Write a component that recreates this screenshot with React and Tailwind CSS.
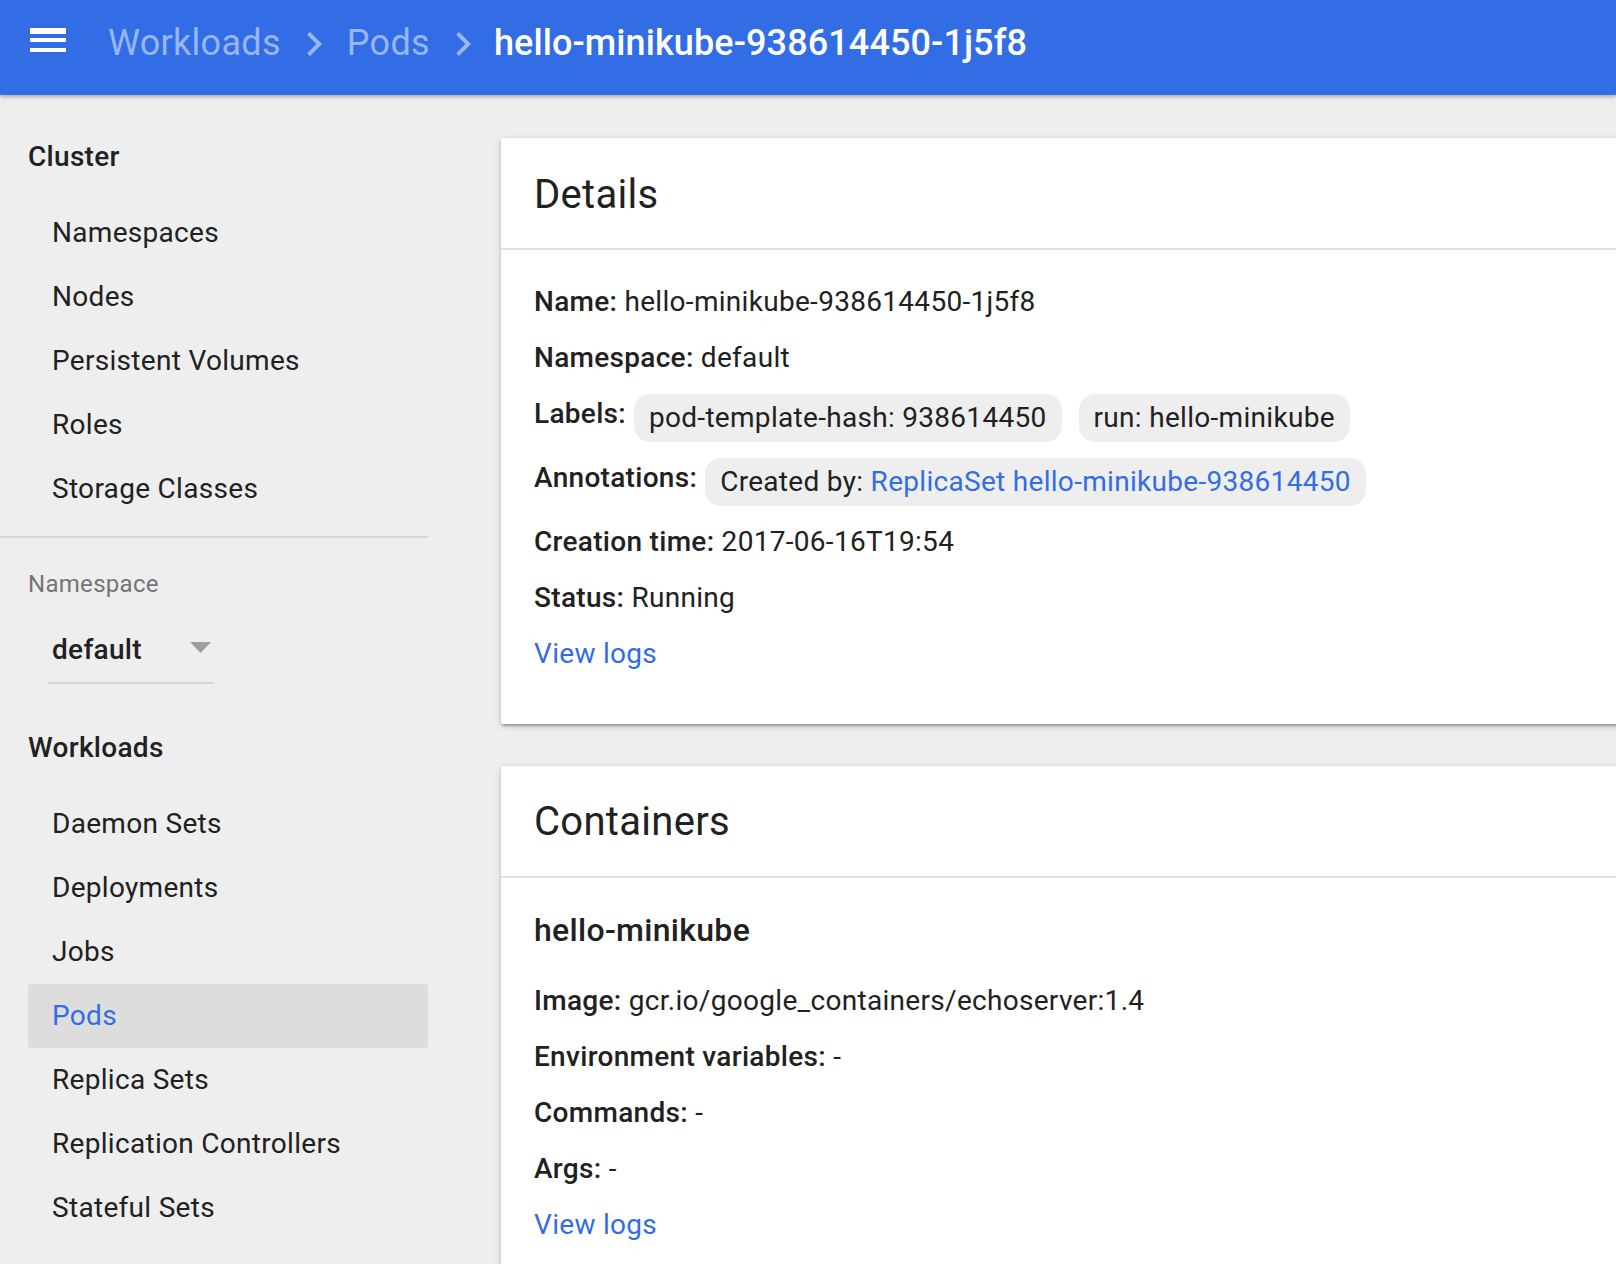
import React from "react";

function MenuIcon() {
  return (
    <svg width="48" height="48" viewBox="0 0 24 24" className="shrink-0">
      <path d="M3 18h18v-2H3v2zm0-5h18v-2H3v2zm0-6v2h18V6H3z" fill="#ffffff" />
    </svg>
  );
}

function Chevron() {
  return (
    <svg width="48" height="48" viewBox="0 0 24 24" className="shrink-0 mt-[7px]">
      <path d="M10 6L8.59 7.41 13.17 12l-4.58 4.59L10 18l6-6z" fill="#98b6f2" />
    </svg>
  );
}

function NavItem({ label, active }) {
  return (
    <div
      className={
        active
          ? "h-[64px] flex items-center ml-[28px] w-[400px] pl-[24px] rounded-[3px] bg-[#dddddd] text-[#326de6] text-[28px]"
          : "h-[64px] flex items-center ml-[28px] w-[400px] pl-[24px] rounded-[3px] text-[#212121] text-[28px]"
      }
    >
      {label}
    </div>
  );
}

function Chip({ children }) {
  return (
    <div className="h-[48px] px-[15px] py-[4px] rounded-[16px] bg-[#eeeeee] leading-[40px] whitespace-nowrap">
      {children}
    </div>
  );
}

function Row({ label, children }) {
  return (
    <div className="leading-[40px] whitespace-nowrap">
      <span className="font-medium">{label}</span> {children}
    </div>
  );
}

export default function App() {
  return (
    <div className="w-[1616px] h-[1264px] overflow-hidden bg-[#eeeeee] font-['Roboto','Noto_Sans',sans-serif] tracking-[0.3px] text-[#212121] flex flex-col">
      {/* Header */}
      <header className="relative z-10 h-[95px] shrink-0 bg-[#326de6] shadow-[0_2px_4px_rgba(0,0,0,0.28)]">
        <div className="h-[80px] flex items-center pl-[24px]">
          <MenuIcon />
          <span className="ml-[36px] translate-y-[3px] text-[36px] leading-[48px] text-[#98b6f2]">Workloads</span>
          <span className="ml-[9px]">
            <Chevron />
          </span>
          <span className="ml-[9px] translate-y-[3px] text-[36px] leading-[48px] text-[#98b6f2]">Pods</span>
          <span className="ml-[9px]">
            <Chevron />
          </span>
          <span className="ml-[7px] translate-y-[3px] text-[36px] leading-[48px] text-white font-medium tracking-[0.1px]">
            hello-minikube-938614450-1j5f8
          </span>
        </div>
      </header>

      <div className="flex flex-1 min-h-0">
        {/* Sidebar */}
        <aside className="w-[469px] shrink-0 pt-[42px]">
          <div className="pl-[28px] text-[28px] leading-[40px] font-medium text-[#212121]">Cluster</div>
          <div className="mt-[24px]">
            <NavItem label="Namespaces" />
            <NavItem label="Nodes" />
            <NavItem label="Persistent Volumes" />
            <NavItem label="Roles" />
            <NavItem label="Storage Classes" />
          </div>
          <div className="mt-[15px] h-[2px] w-[428px] bg-[#d6d6d6]" />
          <div className="mt-[30px] pl-[28px] text-[24px] leading-[32px] text-[#757575]">Namespace</div>
          <div className="mt-[30px] ml-[48px] w-[166px] pb-[12px] border-b-2 border-[#d6d6d6] flex items-center justify-between">
            <span className="pl-[4px] text-[28px] leading-[40px] font-medium text-[#212121]">default</span>
            <svg width="21" height="11" viewBox="0 0 21 11" className="mr-[3px] -translate-y-[3px]">
              <path d="M0 0h21L10.5 11z" fill="#9e9e9e" />
            </svg>
          </div>
          <div className="mt-[44px] pl-[28px] text-[28px] leading-[40px] font-medium text-[#212121]">Workloads</div>
          <div className="mt-[24px]">
            <NavItem label="Daemon Sets" />
            <NavItem label="Deployments" />
            <NavItem label="Jobs" />
            <NavItem label="Pods" active />
            <NavItem label="Replica Sets" />
            <NavItem label="Replication Controllers" />
            <NavItem label="Stateful Sets" />
          </div>
        </aside>

        {/* Main */}
        <main className="flex-1 min-w-0 pl-[32px] pt-[43px] overflow-hidden">
          {/* Details card */}
          <section className="w-[1160px] bg-white rounded-[2px] shadow-[0_2px_6px_rgba(0,0,0,0.2),0_2px_2px_rgba(0,0,0,0.14),0_4px_2px_-2px_rgba(0,0,0,0.12)]">
            <div className="h-[112px] border-b-2 border-[#e0e0e0] px-[33px] pt-[33px]">
              <h2 className="text-[40px] leading-[48px] font-normal text-[#212121]">Details</h2>
            </div>
            <div className="px-[33px] pt-[32px] pb-[50px] flex flex-col gap-[16px] text-[28px]">
              <Row label="Name:">hello-minikube-938614450-1j5f8</Row>
              <Row label="Namespace:">default</Row>
              <div className="flex items-start">
                <span className="font-medium leading-[40px] mr-[8px]">Labels:</span>
                <div className="flex gap-[17px]">
                  <Chip>pod-template-hash: 938614450</Chip>
                  <Chip>run: hello-minikube</Chip>
                </div>
              </div>
              <div className="flex items-start">
                <span className="font-medium leading-[40px] mr-[8px]">Annotations:</span>
                <Chip>
                  Created by: <span className="text-[#326de6]">ReplicaSet hello-minikube-938614450</span>
                </Chip>
              </div>
              <Row label="Creation time:">2017-06-16T19:54</Row>
              <Row label="Status:">Running</Row>
              <div className="leading-[40px] text-[#326de6]">View logs</div>
            </div>
          </section>

          {/* Containers card */}
          <section className="mt-[42px] w-[1160px] bg-white rounded-[2px] shadow-[0_2px_6px_rgba(0,0,0,0.2),0_2px_2px_rgba(0,0,0,0.14),0_4px_2px_-2px_rgba(0,0,0,0.12)]">
            <div className="h-[112px] border-b-2 border-[#e0e0e0] px-[33px] pt-[32px]">
              <h2 className="text-[40px] leading-[48px] font-normal text-[#212121]">Containers</h2>
            </div>
            <div className="px-[33px] pt-[32px] pb-[48px] flex flex-col gap-[16px] text-[28px]">
              <div className="text-[32px] leading-[40px] font-medium mb-[15px]">hello-minikube</div>
              <Row label="Image:">gcr.io/google_containers/echoserver:1.4</Row>
              <Row label="Environment variables:">-</Row>
              <Row label="Commands:">-</Row>
              <Row label="Args:">-</Row>
              <div className="leading-[40px] text-[#326de6]">View logs</div>
            </div>
          </section>
        </main>
      </div>
    </div>
  );
}
